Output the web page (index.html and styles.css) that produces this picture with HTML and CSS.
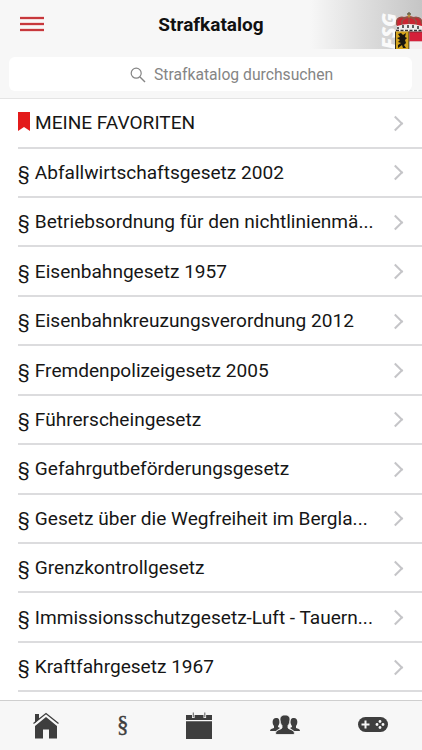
FILE: index.html
```html
<!DOCTYPE html>
<html lang="de">
<head>
<meta charset="utf-8">
<title>Strafkatalog</title>
<link rel="stylesheet" href="styles.css">
</head>
<body>
<div class="app">
  <header class="header">
    <div class="brand">
      <span class="brand-name">FSG</span>
      <svg class="crest" viewBox="0 0 27 37">
        <path d="M2 14C-1 7 4 4 9 5l5-1 5 1c5-1 10 2 8 9v2H2z" fill="#c92632"/>
        <path d="M2 13C0 7 5 4 10 6M14 5v9M27 12C27 7 23 4 18 6M8 14C5 10 8 6 13 5M20 14c3-4 0-8-5-9" fill="none" stroke="#8d5547" stroke-width="1.3"/>
        <path d="M14 0v5M12 2h4" stroke="#665d43" stroke-width="1.3"/>
        <circle cx="14" cy="4" r="1.5" fill="#b98b3c"/>
        <path d="M2 14q12-4 25 0v5H2z" fill="#eee"/>
        <path d="M3 15v2M8 13v3M13 13v3M18 13v3M23 14v3" stroke="#222" stroke-width="1.4"/>
        <path d="M1 18.500h26" stroke="#333" stroke-width="1.500" stroke-dasharray="3 1.500"/>
        <path d="M.5 19.500H14V37H.5z" fill="#d5a51e"/>
        <path d="M3 22l3-1 2 2 3-2-1 4 2 1-2 2 1 3-2 2 2 3H8l-1-3-4 3v-3l3-2-3-1 2-2-3-2 3-1z" fill="#17150f"/>
        <path d="M.5 19.500V37M14 19.500V37" stroke="#302b1c"/>
        <path d="M14.500 20H27v9.500H14.500z" fill="#d5203a"/>
        <path d="M14.500 29.500H27V37H14.500z" fill="#f4eff0"/>
        <path d="M14 20h13" stroke="#7c2830" stroke-width=".8"/>
      </svg>
    </div>
    <div class="titlebar">
      <svg class="menu" viewBox="0 0 24 16"><path d="M0 2h24M0 8h24M0 14h24" stroke="#e58484" stroke-width="2.400"/><path d="M0 2h24M0 8h24M0 14h24" stroke="#bd1f24" stroke-width="1.400"/></svg>
      <h1 class="title">Strafkatalog</h1>
    </div>
    <div class="search">
      <svg class="search-icon" viewBox="0 0 16 16"><circle cx="6.200" cy="6.200" r="5" fill="none" stroke="#858585" stroke-width="1.200"/><path d="M10 10l5 5" stroke="#858585" stroke-width="1.400"/></svg>
      <span class="search-text">Strafkatalog durchsuchen</span>
    </div>
  </header>
  <main class="list">
    <div class="row"><svg class="flag" viewBox="0 0 12 19"><path d="M0 0h12v19l-6-4L0 19z" fill="#e31b1b"/></svg><span class="label">MEINE FAVORITEN</span><i class="chevron"></i></div>
    <div class="row"><span class="mark">§</span><span class="label">Abfallwirtschaftsgesetz 2002</span><i class="chevron"></i></div>
    <div class="row"><span class="mark">§</span><span class="label">Betriebsordnung für den nichtlinienmä...</span><i class="chevron"></i></div>
    <div class="row"><span class="mark">§</span><span class="label">Eisenbahngesetz 1957</span><i class="chevron"></i></div>
    <div class="row"><span class="mark">§</span><span class="label">Eisenbahnkreuzungsverordnung 2012</span><i class="chevron"></i></div>
    <div class="row"><span class="mark">§</span><span class="label">Fremdenpolizeigesetz 2005</span><i class="chevron"></i></div>
    <div class="row"><span class="mark">§</span><span class="label">Führerscheingesetz</span><i class="chevron"></i></div>
    <div class="row"><span class="mark">§</span><span class="label">Gefahrgutbeförderungsgesetz</span><i class="chevron"></i></div>
    <div class="row"><span class="mark">§</span><span class="label">Gesetz über die Wegfreiheit im Bergla...</span><i class="chevron"></i></div>
    <div class="row"><span class="mark">§</span><span class="label">Grenzkontrollgesetz</span><i class="chevron"></i></div>
    <div class="row"><span class="mark">§</span><span class="label">Immissionsschutzgesetz-Luft - Tauern...</span><i class="chevron"></i></div>
    <div class="row"><span class="mark">§</span><span class="label">Kraftfahrgesetz 1967</span><i class="chevron"></i></div>
  </main>
  <nav class="tabs">
    <svg class="home" viewBox="0 0 26 27"><path d="M2 2h4v5L2 11zM13 5l11 9v12.500H16v-9h-6v9H2V14z" fill="#3e3e3e"/><path d="M.5 11.500L13 1.500l12.500 10" fill="none" stroke="#3e3e3e" stroke-width="1.300"/></svg>
    <span class="paragraph">§</span>
    <svg class="calendar" viewBox="0 0 26 27"><path d="M0 3h26v5H0zM0 9.300h26V27H0z" fill="#3e3e3e"/><path d="M7.300 0v6M18.800 0v6" stroke="#f7f7f7" stroke-width="2.600"/><path d="M7.300.5v4.800M18.800.5v4.800" stroke="#6b6b6b" stroke-width="1.100"/></svg>
    <svg class="people" viewBox="0 0 30 20"><g fill="#3e3e3e"><path d="M6 3c3 0 4 2 3.300 5.500C9 10 8 10.500 8 12l2 1-4 3H0c0-2 2-2.500 4-3V11C2 9 1.800 3 6 3zM24 3c-3 0-4 2-3.300 5.500.3 1.500 1.300 2 1.300 3.500l-2 1 4 3h6c0-2-2-2.500-4-3V11c2-2 2.200-8-2-8z"/><path d="M15 0c4 0 5.500 2.500 4.800 6-.3 2-.8 3.500-1.800 4.500V13c2 2 6 1.500 6.500 5l-.5 1.500H6L5.500 18C6 14.500 10 15 12 13v-2.500c-1-1-1.500-2.500-1.800-4.500C9.500 2.500 11 0 15 0z" stroke="#f7f7f7" stroke-width=".8"/></g></svg>
    <svg class="gamepad" viewBox="0 0 30 15"><rect width="30" height="15" rx="7.500" fill="#3e3e3e"/><path d="M3.500 7.500h8M7.500 3.500v8" stroke="#f7f7f7" stroke-width="2"/><g fill="#f7f7f7"><circle cx="22" cy="4.500" r="1.400"/><circle cx="22" cy="10.500" r="1.400"/><circle cx="19" cy="7.500" r="1.400"/><circle cx="25" cy="7.500" r="1.400"/></g></svg>
  </nav>
</div>
</body>
</html>
```
FILE: styles.css
```css
* { box-sizing: border-box; }
body { margin: 0; background: #fff; font-family: Roboto, sans-serif; color: #161616; }
svg { display: block; flex: none; }
.app { height: 750px; display: flex; flex-direction: column; overflow: hidden; }
.header { position: relative; flex: 0 0 99px; background: #f7f7f7; border-bottom: 1px solid #e4e4e4; }
.titlebar { position: relative; height: 57px; display: grid; grid-template-columns: 20px 1fr 20px; padding-top: 14px; }
.menu { width: 24px; height: 16px; margin-top: 2px; margin-left: 20px; }
.title { margin: 0; font-size: 19px; line-height: 22px; font-weight: 700; text-align: center; color: #111; }
.brand { position: absolute; top: 0; right: 0; width: 112px; height: 49px; background: linear-gradient(90deg, #f7f7f7, #dedede 48%, #c5c5c5); }
.brand-name { position: absolute; left: 67px; bottom: 0; writing-mode: vertical-rl; transform: rotate(180deg); font: italic 800 20px/24px "Open Sans", sans-serif; color: #fafafa; }
.crest { position: absolute; right: 0; top: 12px; width: 27px; height: 37px; }
.search { width: 403px; height: 34px; margin-left: 9px; border-radius: 6px; background: #fff; display: flex; align-items: center; padding-left: 121px; }
.search-icon { width: 16px; height: 16px; margin: 1px 8px 0 0; }
.search-text { font-size: 15.7px; line-height: 20px; margin-top: 1px; color: #858585; white-space: nowrap; }
.list { flex: 1; overflow: hidden; padding-top: 0.1px; }
.row { height: 49.45px; margin-left: 18px; padding-right: 20.500px; border-bottom: 2px solid #dcdcde; display: flex; align-items: center; }
.row:first-child .label { padding-top: 1px; }
.flag { width: 12px; height: 19px; margin: -3px 5px 0 0; }
.mark { width: 16.800px; font-size: 19px; line-height: 24px; padding-top: 1px; }
.label { flex: 1; font-size: 19.08px; line-height: 24px; padding-top: 1px; white-space: nowrap; }
.chevron { flex: none; width: 11px; height: 11px; margin: 1px 0.8px 0 0; border-top: 2px solid #c5c5c8; border-right: 2px solid #c5c5c8; transform: rotate(45deg); }
.tabs { position: relative; flex: 0 0 50px; background: #f7f7f7; border-top: 1px solid #cfcfcf; display: flex; align-items: flex-start; color: #3e3e3e; }
.home { width: 26px; height: 27px; margin: 11px 0 0 33px; }
.paragraph { width: 12px; margin: 11px 0 0 58px; font: 400 23px/26px "Liberation Serif", serif; -webkit-text-stroke: 0.4px #3e3e3e; }
.calendar { width: 26px; height: 27px; margin: 11px 0 0 57px; }
.people { width: 30px; height: 20px; margin: 14px 0 0 58px; }
.gamepad { width: 30px; height: 15px; margin: 16px 0 0 58px; }
```
